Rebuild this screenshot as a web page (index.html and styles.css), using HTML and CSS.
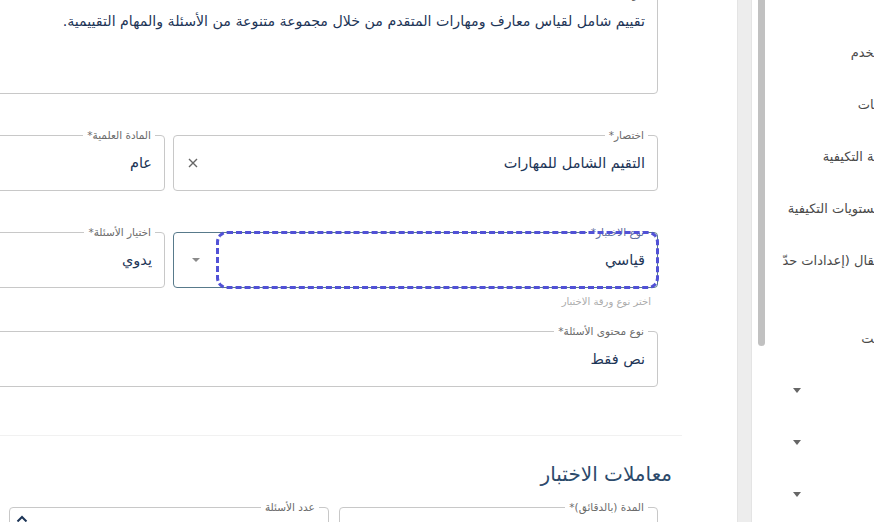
FILE: index.html
```html
<!DOCTYPE html>
<html lang="ar" dir="rtl">
<head>
    <meta charset="UTF-8">
    <meta name="viewport" content="width=device-width, initial-scale=1.0">
    <title>تعديل الاختبار</title>
    <link rel="stylesheet" href="styles.css">
</head>
<body>
    <div class="page">
        <aside class="side">
            <div class="side-list">
                <div class="side-item"><span>&zwj;خدم</span></div>
                <div class="side-item"><span>&zwj;ات</span></div>
                <div class="side-item"><span>&zwj;ة التكيفية</span></div>
                <div class="side-item"><span>&zwj;ستويات التكيفية</span></div>
                <div class="side-item"><span>&zwj;قال (إعدادات حدّ</span></div>
                <div class="side-gap"></div>
                <div class="side-item"><span>&zwj;ت</span></div>
                <div class="side-item toggle"><i class="caret"></i></div>
                <div class="side-item toggle"><i class="caret"></i></div>
                <div class="side-item toggle"><i class="caret"></i></div>
            </div>
            <div class="side-scroll"><div class="thumb"></div></div>
        </aside>

        <div class="gutter"></div>

        <main class="main">
            <section class="card">
                <div class="field area">
                    <span class="label">الوصف*</span>
                    <div class="value">تقييم شامل لقياس معارف ومهارات المتقدم من خلال مجموعة متنوعة من الأسئلة والمهام التقييمية.</div>
                </div>

                <div class="row two">
                    <div class="field">
                        <span class="label">اختصار*</span>
                        <span class="value">التقيم الشامل للمهارات</span>
                        <svg class="clear" width="10" height="10" viewBox="0 0 10 10">
                            <path d="M1 1 L9 9 M9 1 L1 9" stroke="#666" stroke-width="1.4" fill="none"/>
                        </svg>
                    </div>
                    <div class="field">
                        <span class="label">المادة العلمية*</span>
                        <span class="value">عام</span>
                    </div>
                </div>

                <div class="row two">
                    <div>
                        <div class="field select focused">
                            <span class="label">نوع الاختبار*</span>
                            <div class="select-box"><span class="value">قياسي</span></div>
                            <div class="select-arrow"><i class="caret small"></i></div>
                        </div>
                        <div class="helper">اختر نوع ورقة الاختبار</div>
                    </div>
                    <div class="field">
                        <span class="label">اختيار الأسئلة*</span>
                        <span class="value">يدوي</span>
                    </div>
                </div>

                <div class="row one">
                    <div class="field">
                        <span class="label">نوع محتوى الأسئلة*</span>
                        <span class="value">نص فقط</span>
                    </div>
                </div>
            </section>

            <section class="params">
                <h2>معاملات الاختبار</h2>
                <div class="row three">
                    <div class="field">
                        <span class="label">المدة (بالدقائق)*</span>
                    </div>
                    <div class="field">
                        <span class="label">عدد الأسئلة</span>
                        <svg class="spin" width="12" height="8" viewBox="0 0 12 8">
                            <path d="M1.5 6.5 L6 2 L10.5 6.5" stroke="#1d3557" stroke-width="2" fill="none"/>
                        </svg>
                    </div>
                    <div class="field"></div>
                </div>
            </section>
        </main>
    </div>
</body>
</html>
```

FILE: styles.css
```css
* {
    margin: 0;
    padding: 0;
    box-sizing: border-box;
}

body {
    font-family: "DejaVu Sans", sans-serif;
    background: #fff;
    overflow: hidden;
}

.page {
    display: flex;
    direction: rtl;
    width: 874px;
    height: 522px;
    overflow: hidden;
}

/* sidebar */

.side {
    width: 122px;
    flex-shrink: 0;
    display: flex;
}

.side-list {
    flex: 1;
    padding-top: 26px;
    overflow: hidden;
}

.side-item {
    height: 52px;
    display: flex;
    align-items: center;
    font-size: 13px;
    color: #4a4a4a;
    white-space: nowrap;
}

.side-item.toggle {
    justify-content: flex-end;
    padding-left: 28px;
}

.side-gap {
    height: 26px;
}

.caret {
    display: block;
    width: 0;
    height: 0;
    border-left: 4.5px solid transparent;
    border-right: 4.5px solid transparent;
    border-top: 5px solid #666;
}

.caret.small {
    border-left-width: 4px;
    border-right-width: 4px;
    border-top: 4px solid #8a8a8a;
}

.side-scroll {
    width: 13px;
    flex-shrink: 0;
}

.thumb {
    width: 7px;
    height: 350px;
    margin-top: -4px;
    margin-left: 3px;
    background: #c1c1c1;
    border-radius: 4px;
}

.gutter {
    width: 15px;
    flex-shrink: 0;
    background: #ededed;
    border-left: 1px solid #e4e4e4;
    border-right: 1px solid #e4e4e4;
}

/* main form */

.main {
    flex: 1;
    overflow: hidden;
    padding-right: 55px;
}

.card {
    width: 1026px;
    margin-top: -6px;
    padding: 0 24px 48px;
    border-bottom: 1px solid #f1f1f1;
}

.row {
    display: grid;
    gap: 8px;
    margin-top: 41px;
}

.row.two {
    grid-template-columns: 1fr 1fr;
}

.card .row:last-child {
    margin-top: 22px;
}

.row.three {
    grid-template-columns: repeat(3, 1fr);
    gap: 10px;
    margin-top: 18px;
}

.field {
    position: relative;
    height: 56px;
    border: 1px solid #c8c8c8;
    border-radius: 4px;
    display: flex;
    align-items: center;
    padding: 0 12px;
}

.label {
    position: absolute;
    top: -7px;
    right: 9px;
    padding: 0 4px;
    background: #fff;
    font-size: 10.5px;
    line-height: 13px;
    color: #6b6b6b;
    white-space: nowrap;
}

.value {
    font-size: 14.5px;
    line-height: 22px;
    color: #1d3557;
    white-space: nowrap;
}

.field.area {
    height: 100px;
    align-items: flex-start;
    padding-top: 15px;
}

.field.area .value {
    font-size: 14.2px;
}

.clear {
    margin-right: auto;
    margin-left: 2px;
}

.field.select {
    padding: 0;
}

.field.focused {
    border-color: #587a8b;
}

.field.focused .label {
    color: #5a6a9c;
}

.select-box {
    position: relative;
    z-index: 1;
    flex: 1;
    height: 100%;
    display: flex;
    align-items: center;
    padding: 0 12px;
    border-radius: 9px;
    outline: 3px dashed #5151d6;
    outline-offset: -1px;
}

.select-arrow {
    width: 44px;
    display: flex;
    justify-content: center;
}

.helper {
    margin-top: 7px;
    padding-right: 7px;
    font-size: 10px;
    line-height: 14px;
    color: #ababab;
}

.params {
    width: 1026px;
    padding: 0 24px;
}

.params h2 {
    margin: 23px -14px 0 0;
    font-size: 20px;
    line-height: 30px;
    font-weight: normal;
    color: #2c4a6b;
}

.spin {
    align-self: flex-start;
    margin-top: 7px;
    margin-right: auto;
    margin-left: -6px;
}
```
